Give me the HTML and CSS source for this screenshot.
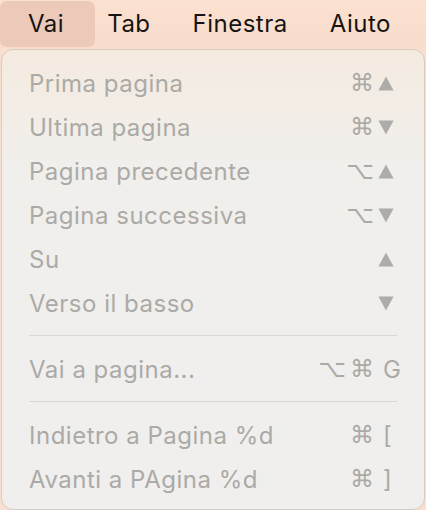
FILE: index.html
```html
<!DOCTYPE html>
<html lang="it">
<head>
<meta charset="utf-8">
<link rel="stylesheet" href="styles.css">
</head>
<body>
<div class="menubar">
  <div class="mb-item active">Vai</div>
  <div class="mb-item">Tab</div>
  <div class="mb-item">Finestra</div>
  <div class="mb-item">Aiuto</div>
</div>
<div class="panel">
  <div class="row"><span class="label">Prima pagina</span><span class="mods">⌘</span><span class="key"><svg class="tri" viewBox="0 0 16 15"><path d="M8 0.5 L15.6 14.5 L0.4 14.5 Z"/></svg></span></div>
  <div class="row"><span class="label">Ultima pagina</span><span class="mods">⌘</span><span class="key"><svg class="tri" viewBox="0 0 16 15"><path d="M0.4 0.5 L15.6 0.5 L8 14.5 Z"/></svg></span></div>
  <div class="row"><span class="label">Pagina precedente</span><span class="mods">⌥</span><span class="key"><svg class="tri" viewBox="0 0 16 15"><path d="M8 0.5 L15.6 14.5 L0.4 14.5 Z"/></svg></span></div>
  <div class="row"><span class="label">Pagina successiva</span><span class="mods">⌥</span><span class="key"><svg class="tri" viewBox="0 0 16 15"><path d="M0.4 0.5 L15.6 0.5 L8 14.5 Z"/></svg></span></div>
  <div class="row"><span class="label">Su</span><span class="mods"></span><span class="key"><svg class="tri" viewBox="0 0 16 15"><path d="M8 0.5 L15.6 14.5 L0.4 14.5 Z"/></svg></span></div>
  <div class="row"><span class="label">Verso il basso</span><span class="mods"></span><span class="key"><svg class="tri" viewBox="0 0 16 15"><path d="M0.4 0.5 L15.6 0.5 L8 14.5 Z"/></svg></span></div>
  <div class="sep"></div>
  <div class="row"><span class="label">Vai a pagina...</span><span class="mods"><span class="mod-gap">⌥</span>⌘</span><span class="key txt">G</span></div>
  <div class="sep"></div>
  <div class="row"><span class="label">Indietro a Pagina %d</span><span class="mods">⌘</span><span class="key txt">[</span></div>
  <div class="row"><span class="label">Avanti a PAgina %d</span><span class="mods">⌘</span><span class="key txt">]</span></div>
</div>
</body>
</html>
```
FILE: styles.css
```css
html, body {
  margin: 0;
  padding: 0;
}
body {
  width: 426px;
  height: 510px;
  overflow: hidden;
  background: #f9dfcf;
  font-family: Inter, "Noto Sans", sans-serif;
}
.menubar {
  display: flex;
  align-items: center;
  height: 48px;
  background: linear-gradient(#fbe1d1, #f9dccb);
}
.mb-item {
  font-size: 24px;
  letter-spacing: 0.5px;
  color: #161412;
  padding: 0 21px;
  line-height: 46px;
  height: 46px;
  margin-top: -1px;
}
.mb-item.active {
  background: #ecc9b9;
  border-radius: 7px;
  padding: 0 31px 0 28px;
  margin-right: -9px;
}
.panel {
  margin-left: 1px;
  width: 422px;
  height: 448px;
  margin-top: 1px;
  border: 1px solid #d9cbc0;
  border-radius: 12px;
  background: linear-gradient(#f4ebe0 0px, #f1efec 120px, #f0efee 100%);
  padding: 11px 0 0 0;
  box-sizing: content-box;
}
.row {
  display: flex;
  align-items: center;
  height: 44px;
  padding: 0 5px 0 27px;
  color: #abaaa6;
  font-size: 24px;
  letter-spacing: 0.5px;
}
.label {
  flex: 1;
}
.mods {
  font-family: "DejaVu Sans", sans-serif;
  font-size: 24px;
  text-align: right;
  width: 80px;
  white-space: pre;
  letter-spacing: -1px;
}
.mod-gap {
  margin-right: 5px;
}
.key {
  width: 46px;
  padding-left: 5px;
  box-sizing: border-box;
  display: flex;
  align-items: center;
}
.key.txt {
  padding-left: 10px;
  font-size: 24px;
}
.tri {
  width: 16px;
  height: 15px;
  fill: #adaca8;
}
.sep {
  height: 22px;
  margin: 0 27px;
  box-sizing: border-box;
  border-top: 10px solid transparent;
  background-clip: padding-box;
}
.sep::after {
  content: "";
  display: block;
  height: 1px;
  background: #d8d7d4;
}
```
